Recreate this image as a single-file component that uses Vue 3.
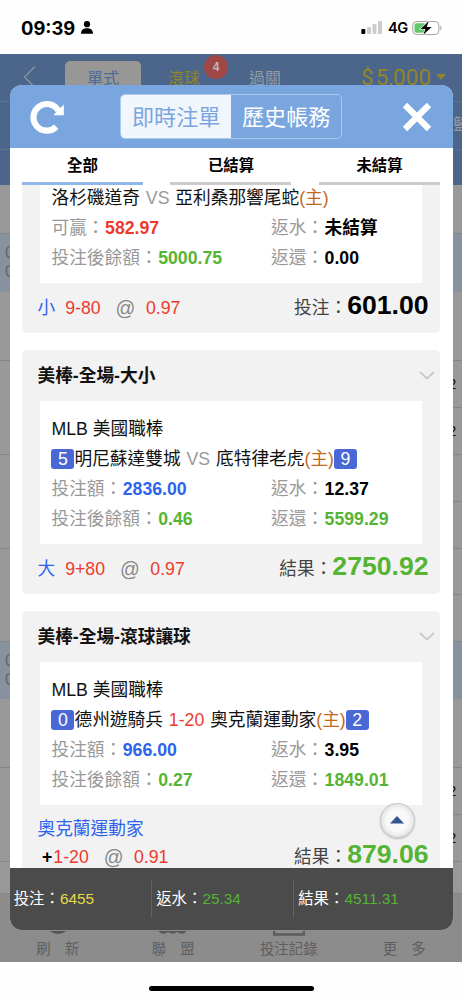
<script setup>
const rows = [
  { h: 49 },
  { h: 58, tint: true, left: true },
  { h: 69 },
  { h: 94, cells: ['2', '2'] },
  { h: 94, cells: ['', ''] },
  { h: 93, cells: ['', ''] },
  { h: 57, tint: true, left: true },
  { h: 69 },
  { h: 94, cells: ['2', '2'] },
  { h: 32 },
]
const tabs = ['全部', '已結算', '未結算']
const bets = [
  {
    open: false,
    home: '洛杉磯道奇', vs: 'VS', away: '亞利桑那響尾蛇',
    amountLabel: '可贏', amount: '582.97', amountColor: 'red',
    balance: '5000.75', rebate: '未結算', back: '0.00', backColor: 'black',
    pick: '小', line: '9-80', odds: '0.97', resultLabel: '投注', result: '601.00', resultColor: 'black',
  },
  {
    open: true, title: '美棒-全場-大小', league: 'MLB 美國職棒',
    homeScore: '5', home: '明尼蘇達雙城', vs: 'VS', away: '底特律老虎', awayScore: '9',
    amountLabel: '投注額', amount: '2836.00', amountColor: 'blue',
    balance: '0.46', rebate: '12.37', back: '5599.29', backColor: 'green',
    pick: '大', line: '9+80', odds: '0.97', resultLabel: '結果', result: '2750.92', resultColor: 'green',
  },
  {
    open: true, title: '美棒-全場-滾球讓球', league: 'MLB 美國職棒',
    homeScore: '0', home: '德州遊騎兵', vs: '1-20', handicap: true, away: '奧克蘭運動家', awayScore: '2',
    amountLabel: '投注額', amount: '966.00', amountColor: 'blue',
    balance: '0.27', rebate: '3.95', back: '1849.01', backColor: 'green',
    pick: '奧克蘭運動家', sign: '+', line: '1-20', odds: '0.91', resultLabel: '結果', result: '879.06', resultColor: 'green',
  },
]
const totals = [
  { label: '投注', value: '6455', color: 'yellow' },
  { label: '返水', value: '25.34', color: 'green' },
  { label: '結果', value: '4511.31', color: 'green' },
]
</script>

<template>
  <div class="phone" lang="zh-Hant">
    <header class="status">
      <span class="time">09:39</span>
      <svg class="person" width="12" height="13" viewBox="0 0 12 13"><circle cx="6" cy="3.2" r="3.1" /><path d="M0 12.8C0 8.8 2.4 7.2 6 7.2s6 1.6 6 5.6z" /></svg>
      <svg class="signal" width="22" height="13" viewBox="0 0 22 13">
        <rect x="0.3" y="8" width="4" height="5" rx="1" fill="#000" />
        <rect x="6" y="6" width="4" height="7" rx="1" fill="#ccc" />
        <rect x="11.5" y="3" width="4" height="10" rx="1" fill="#ccc" />
        <rect x="17" y="0" width="4" height="13" rx="1" fill="#ccc" />
      </svg>
      <span class="net">4G</span>
      <svg class="battery" width="31" height="16" viewBox="0 0 31 16">
        <rect x="0.7" y="1.5" width="26.2" height="13" rx="4" fill="#fff" stroke="#a5a5a5" />
        <rect x="2.5" y="3.2" width="11" height="9.6" rx="2" fill="#62c766" />
        <path d="M28.3 5.5c1.6.8 1.6 4.2 0 5z" fill="#a5a5a5" />
        <path d="M16.8 1L8.6 8.9h4.8L11.2 15l8.4-8.1h-4.9z" fill="#000" stroke="#fff" stroke-width="1.3" paint-order="stroke" />
      </svg>
    </header>

    <main class="page">
      <div class="nav">
        <div class="nav-top">
          <svg class="back" width="14" height="24" viewBox="0 0 14 24"><path d="M12 1.5L1.5 12 12 22.5" fill="none" stroke="#8c969f" stroke-width="1.2" /></svg>
          <span class="nav-tab">單式</span>
          <span class="nav-live">滾球<b class="badge">4</b></span>
          <span class="nav-parlay">過關</span>
          <span class="money">$<i>5,000</i></span>
          <svg class="caret" width="10" height="6" viewBox="0 0 10 6"><path d="M0 0h10L5 6z" fill="#91822e" /></svg>
        </div>
        <div class="nav-mid">籃</div>
        <div class="nav-low"></div>
      </div>
      <div v-for="(r, i) in rows" :key="i" class="row" :class="{ tint: r.tint }" :style="{ height: r.h + 'px' }">
        <div class="row-left"><template v-if="r.left"><span>0</span><span>0</span></template></div>
        <div class="row-right"><span v-for="(c, j) in r.cells" :key="j">{{ c }}</span></div>
      </div>
      <nav class="bottom">
        <div class="item"><svg width="16" height="6"><path d="M1 -1Q8 4 15 -1" fill="none" stroke="#555" stroke-width="3" /></svg><p class="wide"><span>刷</span><span>新</span></p></div>
        <div class="item"><svg width="32" height="6"><path d="M2 -1q5 5 9 0q5 5 9 0q5 5 9 0" fill="none" stroke="#555" stroke-width="2.5" /></svg><p class="wide"><span>聯</span><span>盟</span></p></div>
        <div class="item"><svg width="32" height="6"><path d="M1 0v3.5h30V0" fill="none" stroke="#5b5b5b" stroke-width="2.5" /></svg><p>投注記錄</p></div>
        <div class="item"><svg width="32" height="6"></svg><p class="wide"><span>更</span><span>多</span></p></div>
      </nav>
    </main>
    <footer class="home"><span></span></footer>

    <section class="modal">
      <div class="modal-head">
        <svg class="refresh" width="34" height="34" viewBox="0 0 34 34">
          <path d="M26.2 26.7A13.3 13.3 0 1 1 28.3 10.7" fill="none" stroke="#fff" stroke-width="6.2" />
          <path d="M33.8 4.4V15.2H23.3z" fill="#fff" />
        </svg>
        <div class="toggle"><span class="on">即時注單</span><span>歷史帳務</span></div>
        <svg class="close" width="30" height="30" viewBox="0 0 30 30"><path d="M3 3L27 27M27 3L3 27" stroke="#fff" stroke-width="6.2" /></svg>
      </div>
      <div class="tabs">
        <div v-for="(t, i) in tabs" :key="t" class="tab" :class="{ active: i === 0 }">{{ t }}</div>
      </div>
      <div class="list">
        <article v-for="(b, i) in bets" :key="i" class="card">
          <div v-if="b.open" class="card-head">
            {{ b.title }}
            <svg width="16" height="9" viewBox="0 0 16 9"><path d="M1 1l7 6.5L15 1" fill="none" stroke="#c9c9c9" stroke-width="1.9" /></svg>
          </div>
          <div class="info" :class="{ cut: !b.open }">
            <div v-if="b.open" class="line">{{ b.league }}</div>
            <div class="line teams"><span v-if="b.homeScore" class="score">{{ b.homeScore }}</span>{{ b.home }}&nbsp;<span :class="b.handicap ? 'red' : 'gray'">{{ b.vs }}</span>&nbsp;{{ b.away }}<span class="host">(主)</span><span v-if="b.awayScore" class="score">{{ b.awayScore }}</span></div>
            <div class="line pair">
              <span>{{ b.amountLabel }}：<b :class="b.amountColor">{{ b.amount }}</b></span>
              <span>返水：<b class="black">{{ b.rebate }}</b></span>
            </div>
            <div class="line pair">
              <span>投注後餘額：<b class="green">{{ b.balance }}</b></span>
              <span>返還：<b :class="b.backColor">{{ b.back }}</b></span>
            </div>
          </div>
          <div class="card-foot">
            <div class="pick" :class="{ stacked: b.sign }">
              <span class="choice">{{ b.pick }}</span>
              <span class="odds"><b v-if="b.sign" class="black">{{ b.sign }}</b><span class="red">{{ b.line }}</span><span class="at">@</span><span class="red">{{ b.odds }}</span></span>
            </div>
            <div class="result">{{ b.resultLabel }}：<b :class="b.resultColor">{{ b.result }}</b></div>
          </div>
        </article>
      </div>
      <div class="summary">
        <div v-for="t in totals" :key="t.label" class="total">{{ t.label }}：<span :class="t.color">{{ t.value }}</span></div>
      </div>
      <button class="top"><svg width="14" height="8" viewBox="0 0 14 8"><path d="M7 0l7 7.4H0z" fill="#34558f" /></svg></button>
    </section>
  </div>
</template>

<style>
body { margin: 0; background: #fff; }
</style>

<style scoped>
.phone { position: relative; width: 462px; height: 1000px; overflow: hidden; background: #fefefe; font-family: "Liberation Sans", "Noto Sans CJK TC", sans-serif; font-size: 17.7px; display: flex; flex-direction: column; }
.status { height: 53.5px; flex: none; display: flex; align-items: center; padding: 2px 19px 0 21px; box-sizing: border-box; }
.time { font: 700 18.4px Inter, sans-serif; letter-spacing: 0; width: 60px; }
.person { flex: none; }
.signal { margin-left: auto; }
.net { font: 600 14.6px Inter, sans-serif; margin: 1px 5px 0 5px; width: 19px; white-space: nowrap; letter-spacing: -.5px; }
.page { height: 908.5px; flex: none; background: #999; }
.nav { height: 131px; background: #4b668a; color: #929aa3; font-size: 16px; }
.nav-top { height: 48px; box-sizing: border-box; border-bottom: 1px solid #5b7290; display: flex; align-items: center; white-space: nowrap; }
.back { margin-left: 23px; }
.nav-tab { margin: 7px 0 0 28px; width: 76px; height: 40px; line-height: 35px; background: #999795; color: #4b6b9b; border-radius: 5px 5px 0 0; text-align: center; }
.nav-live { position: relative; margin-left: 27px; color: #938429; }
.badge { position: absolute; left: 36px; top: -10px; width: 24px; height: 24px; border-radius: 50%; background: #a04846; color: #c0b9b8; font-size: 12px; line-height: 24px; text-align: center; }
.nav-parlay { margin-left: 49px; }
.money { margin-left: 80px; color: #938429; font: 22.5px Roboto, sans-serif; }
.money i { font-style: normal; margin-left: 2px; letter-spacing: 0.1px; }
.caret { margin-left: 5px; }
.nav-mid { height: 48px; box-sizing: border-box; border-bottom: 1px solid #5b7290; padding: 11px 0 0 453px; overflow: hidden; white-space: nowrap; line-height: 24px; }
.row { box-sizing: border-box; display: flex; justify-content: space-between; border-bottom: 1px solid #858585; color: #666; }
.row.tint { background: #87929e; border-color: #87929e; }
.row-left { width: 11px; padding: 9px 0 0 5px; box-sizing: border-box; display: flex; flex-direction: column; line-height: 19.5px; font-size: 17px; }
.row-right { width: 20px; display: flex; flex-direction: column; color: #111; font-size: 15px; }
.row-right span { flex: 1; display: flex; align-items: center; padding-left: 6px; }
.row-right span + span { border-top: 1px solid #858585; }
.bottom { height: 68.5px; background: #8c8c8c; display: flex; justify-content: space-around; color: #5e5e5e; font-size: 14.4px; }
.item { width: 115px; display: flex; flex-direction: column; align-items: center; padding-top: 37px; }
.item p { margin: 0; line-height: 24px; }
.wide { display: flex; gap: 14px; }
.home { flex: 1; display: flex; justify-content: center; padding-top: 23.5px; }
.home span { width: 165px; height: 5.5px; border-radius: 3px; background: #000; }

.modal { position: absolute; left: 9.7px; top: 85px; width: 443.3px; height: 845px; border-radius: 12px; overflow: hidden; background: #fff; display: flex; flex-direction: column; }
.modal-head { height: 63px; flex: none; background: #7aa6df; display: flex; align-items: center; padding: 0 20.5px; }
.refresh { width: 34px; }
.toggle { margin-left: 56px; width: 222px; height: 45px; box-sizing: border-box; border: 1px solid #acc9ee; border-radius: 5px; display: flex; overflow: hidden; font-size: 22.1px; line-height: 45px; color: #fff; text-align: center; }
.toggle span { flex: 1; }
.toggle .on { background: #f1f5fc; color: #7aa6df; }
.close { margin-left: auto; }
.tabs { height: 36.5px; flex: none; display: flex; justify-content: space-between; padding: 0 13px 0 12.3px; }
.tab { width: 121px; box-sizing: border-box; border-bottom: 3px solid #ccc; text-align: center; font-size: 15.4px; font-weight: 700; line-height: 36px; color: #000; }
.tab.active { border-color: #8fb7e9; }
.list { height: 683.5px; flex: none; overflow: hidden; padding: 0 13px 0 12.3px; }
.card { background: #f2f2f2; border-radius: 5px; margin-bottom: 17px; }
.card:first-child { border-radius: 0 0 5px 5px; }
.card:last-child { padding-bottom: 17px; margin-bottom: 0; }
.card-head { height: 51px; box-sizing: border-box; padding: 0 5px 3px 15.5px; display: flex; align-items: center; justify-content: space-between; font-weight: 700; color: #111; }
.card-head svg { margin-top: 3px; }
.info { display: flow-root; margin: 0 18px; padding: 13px 0 10px 11.5px; background: #fff; }
.cut { padding: 0 0 0 11.5px; height: 98.5px; }
.cut .line:first-child { margin-top: -2px; }
.line { height: 30px; line-height: 30px; white-space: nowrap; color: #111; }
.pair { display: flex; color: #999; }
.pair > span:first-child { width: 219.5px; }
.pair b { margin-left: 0.5px; }
.teams { display: flex; word-spacing: 1px; }
.score { width: 23px; height: 20px; line-height: 20px; margin-top: 5px; border-radius: 3px; background: #4a67d6; color: #fff; text-align: center; }
.gray { color: #999; }
.red { color: #ee3a2c; }
.blue { color: #2e63ee; }
.green { color: #56b435; }
.black { color: #000; }
.yellow { color: #e8da45; }
.host { color: #c06a1c; }
.card-foot { height: 50px; padding: 0 11.5px 0 15.5px; display: flex; justify-content: space-between; white-space: nowrap; }
.pick { display: flex; line-height: 50px; gap: 10px; }
.choice { color: #2e63ee; }
.odds { display: flex; }
.at { color: #888; font-size: 19.5px; margin: 0 10.5px 0 15px; }
.stacked { flex-direction: column; gap: 0; padding-top: 10px; line-height: 28px; }
.stacked .odds { padding-left: 4.5px; }
.stacked .black { margin-right: 1px; }
.result { height: 50px; line-height: 50px; color: #444; }
.result b { font-size: 26.6px; line-height: 40px; }
.card:last-child .result { margin-top: 27px; }
.summary { height: 62px; flex: none; background: #4b4b4b; display: flex; align-items: center; font-size: 15.4px; color: #fff; }
.total { width: 137.5px; height: 38px; line-height: 38px; padding-left: 4px; white-space: nowrap; }
.total + .total { border-left: 1px solid #626262; width: 137px; }
.top { position: absolute; left: 370px; top: 718px; width: 35px; height: 35px; padding: 0 0 1px; border: 1.5px solid #c4c4c4; border-radius: 50%; background: radial-gradient(circle, #f9f9f9 45%, #e2e2e2 75%); box-shadow: 0 1px 2px #8888; display: flex; align-items: center; justify-content: center; }
</style>
